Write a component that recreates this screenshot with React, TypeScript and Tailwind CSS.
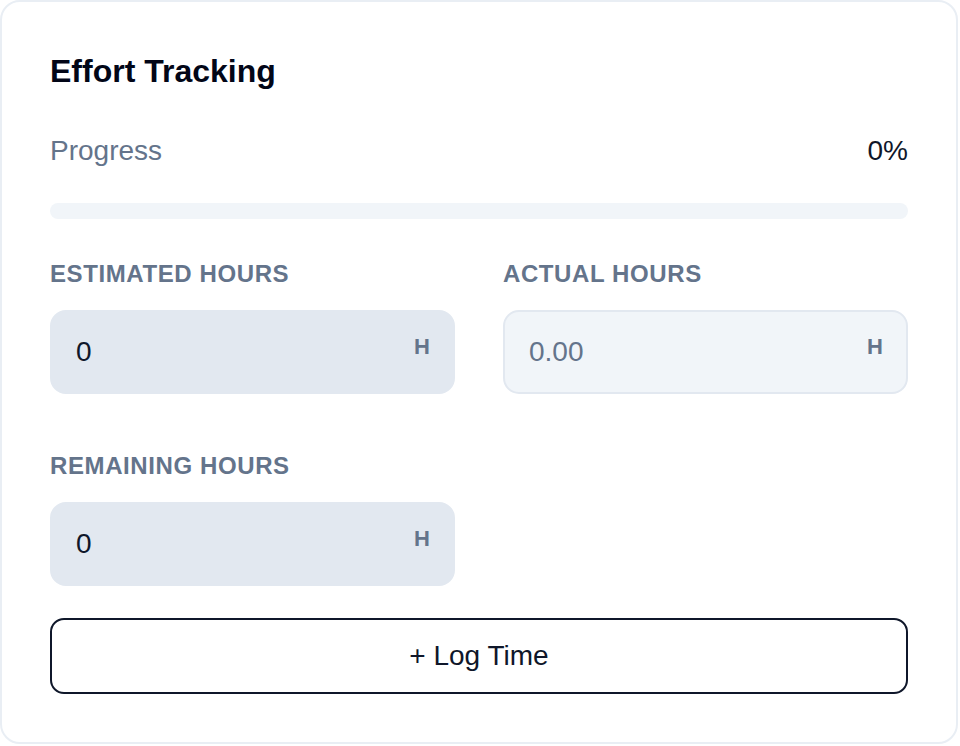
import React, { useState } from 'react';

interface HoursFieldProps {
  label: string;
  value: string;
  placeholder?: string;
  readOnly?: boolean;
  onChange?: (v: string) => void;
}

const HoursField: React.FC<HoursFieldProps> = ({ label, value, placeholder, readOnly, onChange }) => {
  return (
    <div className="flex flex-col">
      <label className="text-[24px] leading-[36px] font-bold uppercase tracking-wide text-[#64748b] mb-[18px]">
        {label}
      </label>
      <div
        className={`flex items-start h-[84px] rounded-[16px] border-2 pl-6 pr-[23px] ${
          readOnly ? 'bg-[#f1f5f9] border-[#e2e8f0]' : 'bg-[#e2e8f0] border-[#e2e8f0]'
        }`}
      >
        <input
          className="flex-1 min-w-0 h-full bg-transparent outline-none text-[28px] text-[#0f172a] placeholder:text-[#64748b]"
          value={value}
          placeholder={placeholder}
          readOnly={readOnly}
          onChange={(e) => onChange?.(e.target.value)}
        />
        <span className="mt-[18px] text-[22px] leading-[33px] font-bold text-[#64748b]">H</span>
      </div>
    </div>
  );
};

const App: React.FC = () => {
  const [estimated, setEstimated] = useState('0');
  const [remaining, setRemaining] = useState('0');
  const progress = 0;

  return (
    <div className="font-['Liberation_Sans',Arial,sans-serif]">
      <div className="w-[958px] bg-white border-2 border-[#e9eef4] rounded-[20px] px-12 pt-12 pb-12">
        <h2 className="text-[32px] leading-[42px] font-bold text-[#020617]">Effort Tracking</h2>

        <div className="flex justify-between items-center mt-[38px] text-[28px] leading-[42px]">
          <span className="text-[#64748b]">Progress</span>
          <span className="text-[#0f172a]">{progress}%</span>
        </div>

        <div className="mt-[31px] h-4 rounded-full bg-[#f1f5f9] overflow-hidden">
          <div className="h-full bg-[#0f172a]" style={{ width: `${progress}%` }} />
        </div>

        <div className="grid grid-cols-2 gap-x-12 gap-y-[54px] mt-[37px]">
          <HoursField label="Estimated Hours" value={estimated} onChange={setEstimated} />
          <HoursField label="Actual Hours" value="" placeholder="0.00" readOnly />
          <HoursField label="Remaining Hours" value={remaining} onChange={setRemaining} />
        </div>

        <button className="mt-8 w-full h-[76px] rounded-[14px] border-2 border-[#0f172a] bg-white text-[28px] text-[#0f172a]">
          + Log Time
        </button>
      </div>
    </div>
  );
};

export default App;
